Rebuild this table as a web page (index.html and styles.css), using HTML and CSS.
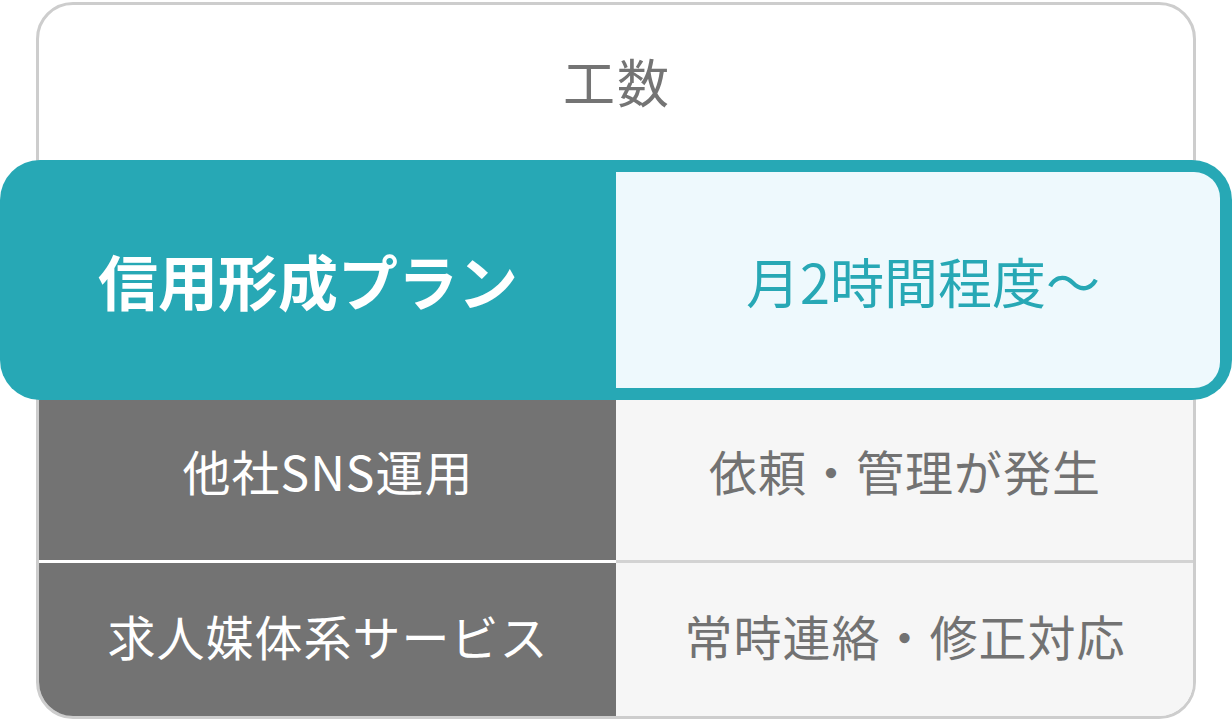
FILE: index.html
```html
<!DOCTYPE html>
<html lang="ja">
<head>
<meta charset="utf-8">
<link rel="stylesheet" href="styles.css">
</head>
<body>
<div class="table">
  <div class="head">工数</div>
  <div class="band">
    <div class="band-name">信用形成プラン</div>
    <div class="band-value">月2時間程度〜</div>
  </div>
  <div class="row first">
    <div class="name">他社SNS運用</div>
    <div class="value">依頼・管理が発生</div>
  </div>
  <div class="row last">
    <div class="name">求人媒体系サービス</div>
    <div class="value">常時連絡・修正対応</div>
  </div>
</div>
</body>
</html>
```
FILE: styles.css
```css
html, body {
  margin: 0;
  padding: 0;
  background: #ffffff;
}
body {
  font-family: "Noto Sans CJK JP", "Noto Sans", sans-serif;
  width: 1232px;
  height: 721px;
  overflow: hidden;
}
.table {
  box-sizing: border-box;
  margin: 2px 0 0 36px;
  width: 1160px;
  height: 717px;
  border: 3px solid #cdcdcd;
  border-radius: 37px;
  display: flex;
  flex-direction: column;
}
.head {
  height: 155px;
  display: flex;
  align-items: center;
  justify-content: center;
  font-size: 52px;
  font-weight: 400;
  letter-spacing: 2px;
  padding-left: 2px;
  padding-bottom: 4px;
  box-sizing: border-box;
  color: #747474;
}
.band {
  margin: 0 -39px;
  height: 240px;
  box-sizing: border-box;
  background: #27a8b5;
  border-radius: 40px;
  padding: 12px 12px 12px 0;
  display: grid;
  grid-template-columns: 616px 1fr;
}
.band-name {
  display: flex;
  align-items: center;
  justify-content: center;
  color: #ffffff;
  font-weight: 700;
  font-size: 60px;
  letter-spacing: 0;
  padding-bottom: 2px;
}
.band-value {
  background: #eef9fd;
  border-radius: 0 26px 26px 0;
  display: flex;
  align-items: center;
  justify-content: center;
  color: #27a8b5;
  font-size: 54px;
  font-weight: 400;
  letter-spacing: 0;
  padding-left: 10px;
}
.row {
  display: grid;
  grid-template-columns: 577px 1fr;
}
.row.first {
  height: 160px;
}
.row.last {
  flex: 1;
}
.name, .value {
  display: flex;
  align-items: center;
  justify-content: center;
  font-size: 48px;
  font-weight: 400;
  letter-spacing: 1px;
  padding-left: 1px;
}
.name {
  background: #737373;
  color: #ffffff;
}
.value {
  background: #f6f6f6;
  color: #727272;
}
.row.first .name, .row.first .value {
  padding-bottom: 20px;
}
.row.last .name {
  border-top: 3px solid #ffffff;
  border-bottom-left-radius: 34px;
  padding-bottom: 10px;
}
.row.last .value {
  border-top: 3px solid #d3d3d3;
  border-bottom-right-radius: 34px;
  padding-bottom: 10px;
}
```
